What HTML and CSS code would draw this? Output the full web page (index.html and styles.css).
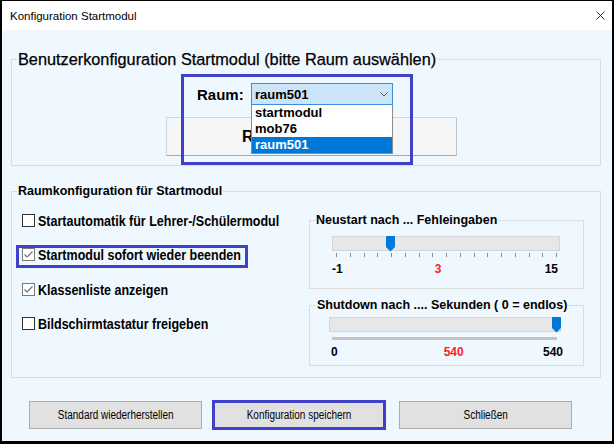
FILE: index.html
```html
<!DOCTYPE html>
<html lang="de">
<head>
<meta charset="utf-8">
<title>Konfiguration Startmodul</title>
<link rel="stylesheet" href="styles.css">
</head>
<body>
<div class="window">
  <div class="titlebar">
    <span class="title">Konfiguration Startmodul</span>
    <svg class="close" width="9" height="9" viewBox="0 0 9 9"><path d="M0.5 0.5L8.5 8.5M8.5 0.5L0.5 8.5"/></svg>
  </div>
  <div class="content">
    <fieldset class="group g1">
      <legend>Benutzerkonfiguration Startmodul (bitte Raum auswählen)</legend>
      <div class="g1-body">
        <div class="room-row">
          <span class="room-label">Raum:</span>
          <div class="combo">
            <span>raum501</span>
            <svg class="chev" width="8" height="5" viewBox="0 0 8 5"><path d="M0.5 0.5L4 4L7.5 0.5"/></svg>
            <ul class="dropdown">
              <li>startmodul</li>
              <li>mob76</li>
              <li class="sel">raum501</li>
            </ul>
          </div>
        </div>
        <div class="apply-btn">R</div>
        <div class="hl hl-room"></div>
      </div>
    </fieldset>

    <fieldset class="group g2">
      <legend>Raumkonfiguration für Startmodul</legend>
      <div class="g2-body">
        <div class="checks">
          <div class="check"><span class="cb"></span><span class="cb-text">Startautomatik für Lehrer-/Schülermodul</span></div>
          <div class="check"><span class="cb on"><svg width="11" height="11" viewBox="0 0 11 11"><path d="M1.5 5.5L4 8L9.5 2.5"/></svg></span><span class="cb-text">Startmodul sofort wieder beenden</span><div class="hl hl-check"></div></div>
          <div class="check"><span class="cb on"><svg width="11" height="11" viewBox="0 0 11 11"><path d="M1.5 5.5L4 8L9.5 2.5"/></svg></span><span class="cb-text">Klassenliste anzeigen</span></div>
          <div class="check"><span class="cb"></span><span class="cb-text">Bildschirmtastatur freigeben</span></div>
        </div>
        <div class="sliders">
          <fieldset class="sub neustart">
            <legend>Neustart nach ... Fehleingaben</legend>
            <div class="track">
              <svg class="thumb" width="9" height="16" viewBox="0 0 9 16"><path d="M0 1Q0 0 1 0H8Q9 0 9 1V11L4.5 15.5L0 11Z"/></svg>
            </div>
            <svg class="ticks" width="221" height="4" viewBox="0 0 221 4"><path d="M0.5 0V4M14.5 0V4M28.5 0V4M41.5 0V4M55.5 0V4M69.5 0V4M83.5 0V4M96.5 0V4M110.5 0V4M124.5 0V4M138.5 0V4M151.5 0V4M165.5 0V4M179.5 0V4M193.5 0V4M206.5 0V4M220.5 0V4"/></svg>
            <div class="labels">
              <span>-1</span><span class="mid">3</span><span class="end">15</span>
            </div>
          </fieldset>
          <fieldset class="sub shutdown">
            <legend>Shutdown nach .... Sekunden ( 0 = endlos)</legend>
            <div class="track">
              <svg class="thumb" width="9" height="16" viewBox="0 0 9 16"><path d="M0 1Q0 0 1 0H8Q9 0 9 1V11L4.5 15.5L0 11Z"/></svg>
            </div>
            <div class="bar"></div>
            <div class="labels">
              <span>0</span><span class="mid">540</span><span class="end">540</span>
            </div>
          </fieldset>
        </div>
      </div>
    </fieldset>

    <div class="buttons">
      <div class="btn"><span class="btn-label">Standard wiederherstellen</span></div>
      <div class="btn btn-hl"><span class="btn-label">Konfiguration speichern</span></div>
      <div class="btn btn-last"><span class="btn-label">Schließen</span></div>
    </div>
  </div>
</div>
</body>
</html>
```

FILE: styles.css
```css
html, body {
  margin: 0;
  padding: 0;
}
body {
  background: #000;
  font-family: "Liberation Sans", Arial, sans-serif;
  color: #000;
  width: 614px;
  height: 444px;
  overflow: hidden;
}
.window {
  margin: 1px 0 0 2px;
  width: 610px;
  height: 440px;
  display: flex;
  flex-direction: column;
  background: #f0f8ff;
}
.titlebar {
  height: 29px;
  flex: none;
  background: #fff;
  display: flex;
  align-items: center;
  justify-content: space-between;
  padding: 0 7px 0 8px;
}
.title {
  font-size: 11.5px;
}
.close path {
  stroke: #333;
  stroke-width: 1;
  fill: none;
}
.content {
  flex: 1;
  padding: 19px 11px 0 9px;
}
.group,
.sub {
  margin: 0;
  padding: 0;
  border: 1px solid #dcdcdc;
  min-width: 0;
}
.g1 legend {
  font-size: 16.3px;
  line-height: 20px;
  padding: 0 1px;
  margin-left: 5px;
  -webkit-text-stroke: 0.25px #000;
}
.g1-body {
  position: relative;
  padding: 14px 0 9px 0;
}
.room-row {
  display: flex;
  align-items: center;
  height: 22px;
  margin-left: 185px;
}
.room-label {
  width: 54px;
  font-weight: bold;
  font-size: 15px;
}
.combo {
  position: relative;
  width: 142px;
  height: 22px;
  box-sizing: border-box;
  border: 1px solid #3d8ee0;
  background: #cce4f7;
  display: flex;
  align-items: center;
  padding-left: 3px;
  font-weight: bold;
  font-size: 13px;
}
.chev {
  margin-left: auto;
  margin-right: 4px;
}
.chev path {
  stroke: #555;
  fill: none;
  stroke-width: 1;
}
.dropdown {
  position: absolute;
  left: -1px;
  top: calc(100% + 1px);
  z-index: 2;
  width: 142px;
  box-sizing: border-box;
  margin: 0;
  padding: 0;
  list-style: none;
  background: #fff;
  border: 1px solid #8c8c8c;
  border-top: none;
}
.dropdown li {
  height: 16px;
  line-height: 16px;
  padding-left: 3px;
  font-weight: bold;
  font-size: 13px;
}
.dropdown li.sel {
  background: #0078d7;
  color: #fff;
}
.apply-btn {
  margin: 12px 0 0 154px;
  width: 291px;
  height: 39px;
  box-sizing: border-box;
  border: 1px solid #d4d4d4;
  border-bottom-color: #a8a8a8;
  border-right-color: #c4c4c4;
  background: #f5f6f7;
  padding-left: 75px;
  display: flex;
  align-items: center;
  font-weight: bold;
  font-size: 16px;
}
.hl {
  position: absolute;
  box-sizing: border-box;
  border: 3px solid #4040c8;
  pointer-events: none;
  z-index: 3;
}
.hl-room {
  left: 169px;
  top: 5px;
  width: 232px;
  height: 91px;
}
.g2 {
  margin-top: 17px;
}
.g2 legend,
.sub legend {
  font-weight: bold;
  font-size: 12.5px;
  line-height: 16px;
  padding: 0 1px;
  margin-left: 5px;
}
.shutdown legend {
  margin-left: 6px;
}
.g2-body {
  display: flex;
  align-items: flex-start;
  padding-bottom: 11px;
}
.checks {
  width: 297px;
  flex: none;
  box-sizing: border-box;
  padding: 11px 0 0 10px;
  display: flex;
  flex-direction: column;
  gap: 14.67px;
}
.check {
  position: relative;
  display: flex;
  align-items: center;
  height: 20px;
}
.cb {
  width: 13px;
  height: 13px;
  flex: none;
  box-sizing: border-box;
  border: 1px solid #333;
  background: #fff;
  margin-right: 3px;
  display: flex;
  align-items: center;
  justify-content: center;
}
.cb.on {
  border-color: #7a7a7a;
}
.cb svg path {
  stroke: #6e6e6e;
  stroke-width: 1.1;
  fill: none;
}
.cb-text {
  display: inline-block;
  font-weight: bold;
  font-size: 15px;
  white-space: nowrap;
  transform: scaleX(0.834);
  transform-origin: left center;
}
.hl-check {
  left: -6px;
  top: 0;
  width: 232px;
  height: 23px;
}
.sliders {
  width: 275px;
  flex: none;
  padding-top: 13px;
  display: flex;
  flex-direction: column;
  gap: 8px;
}
.neustart {
  padding-bottom: 12px;
}
.shutdown {
  padding-bottom: 6px;
}
.track {
  position: relative;
  height: 15px;
  box-sizing: border-box;
  background: #e7e7e7;
  border: 1px solid #d6d6d6;
}
.neustart .track {
  margin: 8px 0 0 22px;
  width: 228px;
}
.shutdown .track {
  margin: 4px 0 0 19px;
  width: 232px;
}
.thumb {
  position: absolute;
  top: -1px;
}
.thumb path {
  fill: #0078d7;
}
.neustart .thumb {
  left: 53px;
}
.shutdown .thumb {
  left: 222px;
}
.ticks {
  display: block;
  margin: 2px 0 0 26px;
}
.ticks path {
  stroke: #8a8a8a;
  stroke-width: 1;
  fill: none;
}
.bar {
  margin: 5px 0 0 22px;
  width: 225px;
  height: 3px;
  background: #c4c4c4;
}
.labels {
  display: flex;
  font-weight: bold;
  font-size: 12px;
  line-height: 14px;
  margin-top: 5px;
}
.labels .mid {
  color: #f22;
}
.labels .end {
  margin-left: auto;
}
.neustart .labels {
  margin-left: 22px;
  width: 226px;
}
.neustart .labels .mid {
  margin-left: 92px;
}
.shutdown .labels {
  margin-left: 21px;
  width: 232px;
}
.shutdown .labels .mid {
  margin-left: 106px;
}
.buttons {
  display: flex;
  align-items: center;
  height: 30px;
  margin-top: 22px;
  padding-left: 18px;
}
.btn {
  width: 173px;
  height: 28px;
  flex: none;
  box-sizing: border-box;
  border: 1px solid #adadad;
  background: #e1e1e1;
  display: flex;
  align-items: center;
  justify-content: center;
  font-size: 12px;
  white-space: nowrap;
}
.btn-label {
  display: inline-block;
  transform: scaleX(0.83);
  transform-origin: center;
}
.btn-hl {
  width: 174px;
  height: 30px;
  border: 3px solid #4040c8;
  margin-left: 10px;
}
.btn-last {
  margin-left: 13px;
}
```
